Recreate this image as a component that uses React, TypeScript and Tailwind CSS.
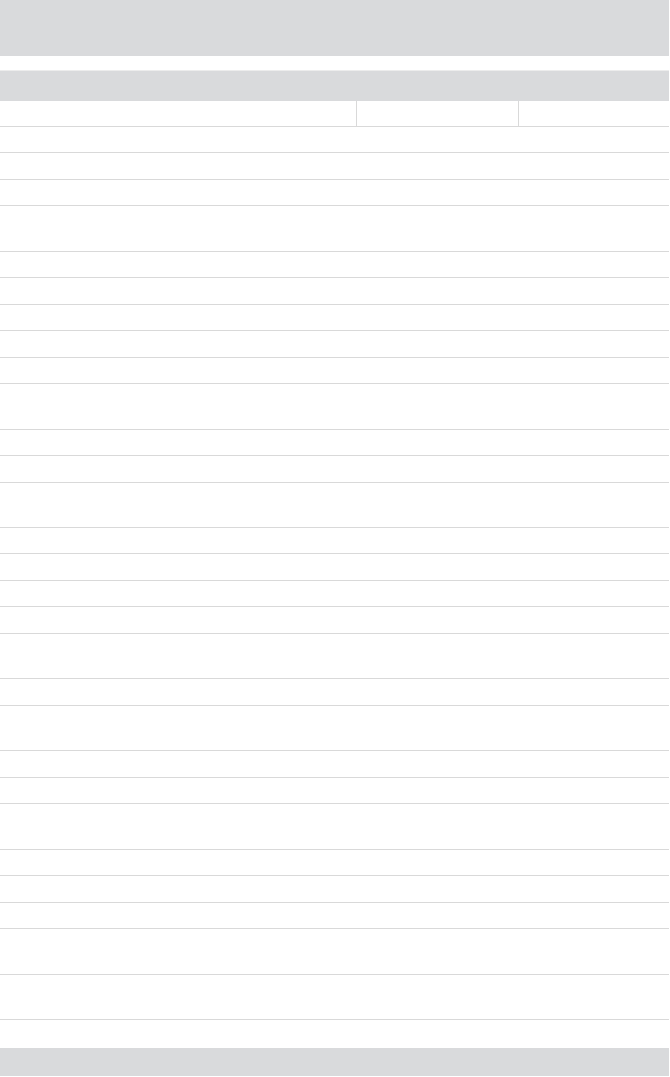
import React from 'react';

// row kinds: 's' = one line, 'd' = two lines
const rows: ('s' | 'd')[] = [
  's', 's', 's', 'd',
  's', 's', 's', 's', 's', 'd',
  's', 's', 'd',
  's', 's', 's', 's', 'd',
  's', 'd',
  's', 's', 'd',
  's', 's', 's', 'd', 'd',
];

const SkeletonRow: React.FC<{ kind: 's' | 'd' }> = ({ kind }) => (
  <div
    className={`box-border border-b border-[#d9d9d9] ${kind === 's' ? 'h-[26.46px]' : 'h-[45.5px]'}`}
  />
);

export default function App() {
  return (
    <div className="w-[669px] min-h-[1077px] bg-white font-['Liberation_Sans',sans-serif]">
      <div className="h-[56px] bg-[#d9dadc]" />

      <div className="mt-[14px] box-border h-[31px] border-t border-[#ececec] bg-[#d9dadc]" />

      <div className="grid grid-cols-[356px_1px_161px_1px_150px] box-border h-[26px] border-b border-[#d9d9d9]">
        <div />
        <div className="bg-[#d9d9d9]" />
        <div />
        <div className="bg-[#d9d9d9]" />
        <div />
      </div>

      <div>
        {rows.map((r, i) => (
          <SkeletonRow key={i} kind={r} />
        ))}
      </div>

      <div className="mt-[28px] h-[28px] bg-[#d9dadc]" />
    </div>
  );
}
